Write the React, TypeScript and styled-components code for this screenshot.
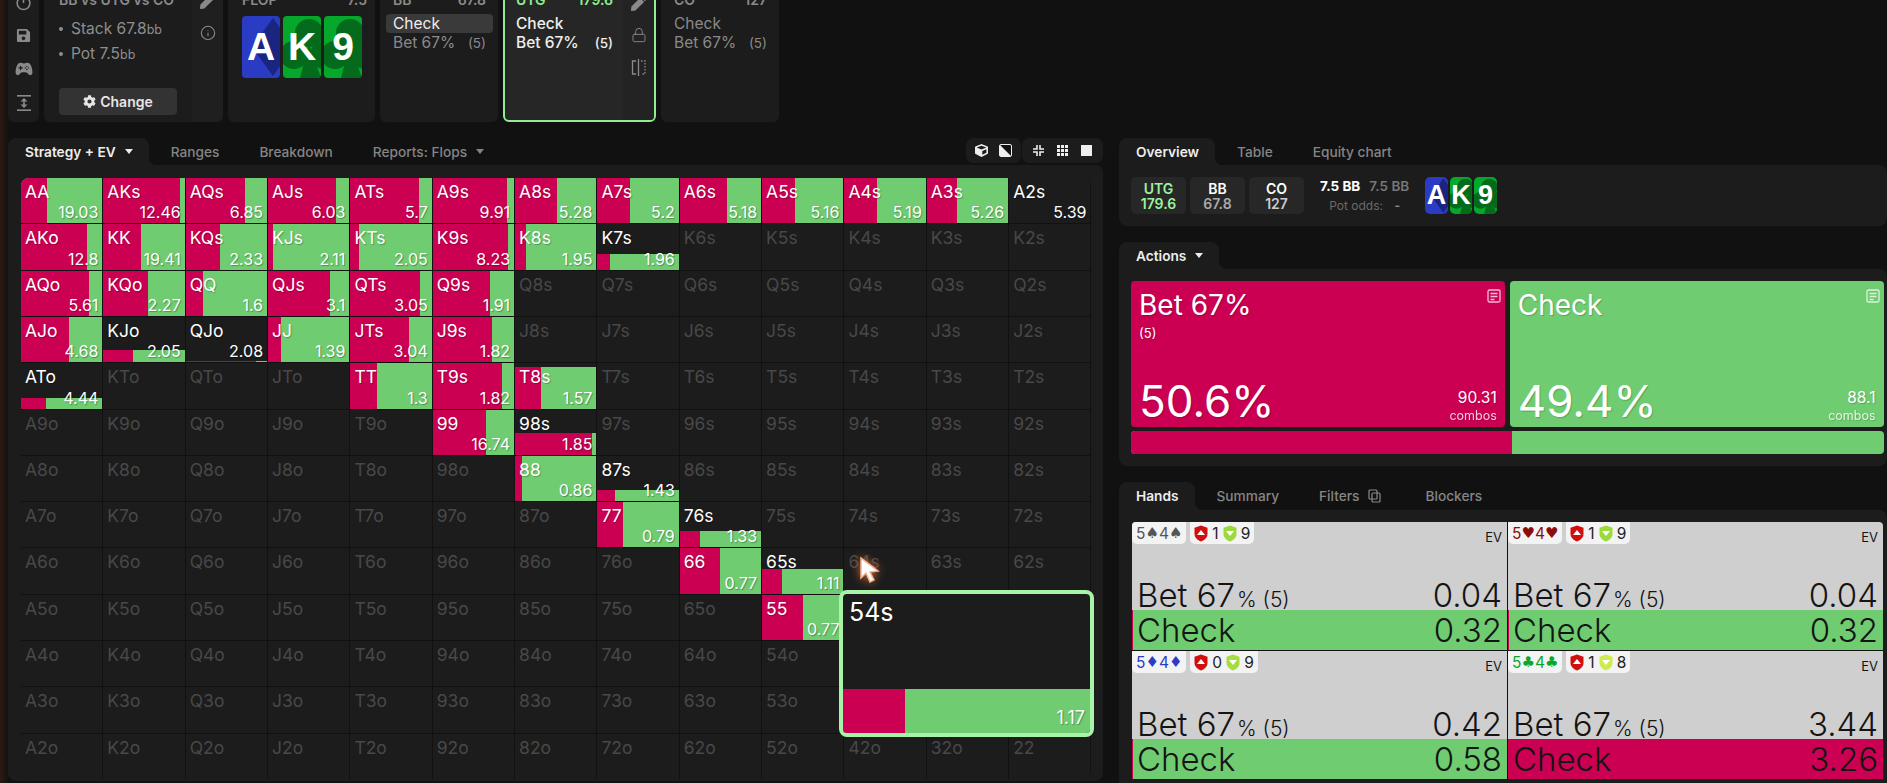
import { FC, ReactNode } from "react";
import styled, { createGlobalStyle } from "styled-components";
import { FaCog, FaCube, FaPen, FaSave } from "react-icons/fa";
import { IoGameController } from "react-icons/io5";
import { Info, Lock, Power } from "lucide-react";

const RED = "#cb0053";
const GREEN = "#6fcc70";
const PANEL = "#1c1c1c";
const ranks = "AKQJT98765432".split("");

// value, share of the first action, height of the bar
const cellData: Record<string, [number, number, number?]> = {
  AA: [19.03, 0.32],
  AKs: [12.46, 0.94],
  AQs: [6.85, 0.73],
  AJs: [6.03, 0.83],
  ATs: [5.7, 0.84],
  A9s: [9.91, 0.91],
  A8s: [5.28, 0.52],
  A7s: [5.2, 0.4],
  A6s: [5.18, 0.58],
  A5s: [5.16, 0.4],
  A4s: [5.19, 0.4],
  A3s: [5.26, 0.37],
  A2s: [5.39, 0.5, 0],
  AKo: [12.8, 0.81],
  KK: [19.41, 0.46],
  KQs: [2.33, 0.42],
  KJs: [2.11, 0.065],
  KTs: [2.05, 0.11],
  K9s: [8.23, 0.925],
  K8s: [1.95, 0.13],
  K7s: [1.96, 0.15, 0.35],
  AQo: [5.61, 0.83],
  KQo: [2.27, 0.55],
  QQ: [1.6, 0.21],
  QJs: [3.1, 0.765],
  QTs: [3.05, 0.85],
  Q9s: [1.91, 0.71],
  AJo: [4.68, 0.59],
  KJo: [2.05, 0.36, 0.26],
  QJo: [2.08, 0.87, 0.03],
  JJ: [1.39, 0.16],
  JTs: [3.04, 0.72],
  J9s: [1.82, 0.73],
  ATo: [4.44, 0.31, 0.24],
  TT: [1.3, 0.33],
  T9s: [1.82, 0.85],
  T8s: [1.57, 0.32, 0.92],
  "99": [16.74, 0.66],
  "98s": [1.85, 0.95, 0.48],
  "88": [0.86, 0.09],
  "87s": [1.43, 0.21, 0.24],
  "77": [0.79, 0.32],
  "76s": [1.33, 0.25, 0.37],
  "66": [0.77, 0.49],
  "65s": [1.11, 0.25, 0.55],
  "55": [0.77, 0.5],
};

const labelFor = (row: number, col: number) => {
  if (row === col) return ranks[row] + ranks[col];
  return row < col ? ranks[row] + ranks[col] + "s" : ranks[col] + ranks[row] + "o";
};

const labels = ranks.flatMap((_, row) => ranks.map((_, col) => labelFor(row, col)));

const hands = [
  { a: "5", b: "4", suit: "♠", color: "#555", low: 1, high: 9, shade: "#9bd93c", bet: "0.04", check: "0.32" },
  { a: "5", b: "4", suit: "♥", color: "#8c0b0b", low: 1, high: 9, shade: "#9bd93c", bet: "0.04", check: "0.32" },
  { a: "5", b: "4", suit: "♦", color: "#2a3cc8", low: 0, high: 9, shade: "#a6dc40", bet: "0.42", check: "0.58" },
  { a: "5", b: "4", suit: "♣", color: "#0aa82a", low: 1, high: 8, shade: "#cdea50", bet: "3.44", check: "3.26", worse: true },
];

const Suit: FC<{ kind: "diamond" | "club" }> = ({ kind }) =>
  kind === "diamond" ? (
    <SuitArt viewBox="0 0 38 62" preserveAspectRatio="none">
      <polygon points="31,2 52,31 31,60 10,31" fill="#19257f" />
    </SuitArt>
  ) : (
    <SuitArt viewBox="0 0 38 62" preserveAspectRatio="none">
      <g fill="#056b1c">
        <circle cx="26" cy="17" r="14" />
        <circle cx="11" cy="39" r="14" />
        <circle cx="41" cy="39" r="14" />
        <polygon points="26,28 38,62 17,62" />
      </g>
    </SuitArt>
  );

const Board: FC<{ small?: boolean }> = ({ small }) => (
  <BoardRow $small={small}>
    <BoardCard $small={small} $bg="#2a3cc4">
      <Suit kind="diamond" />
      <span>A</span>
    </BoardCard>
    <BoardCard $small={small} $bg="#05a82b">
      <Suit kind="club" />
      <span>K</span>
    </BoardCard>
    <BoardCard $small={small} $bg="#05a82b">
      <Suit kind="club" />
      <span>9</span>
    </BoardCard>
  </BoardRow>
);

const HeightIcon = () => (
  <svg width="14" height="16" viewBox="0 0 14 16" fill="#8a8a8a">
    <rect x="0" y="0" width="14" height="1.6" />
    <rect x="0" y="14.4" width="14" height="1.6" />
    <polygon points="7,3 10.5,6.5 3.5,6.5" />
    <polygon points="7,13 10.5,9.5 3.5,9.5" />
    <rect x="6.2" y="6" width="1.6" height="4" />
  </svg>
);

const SplitIcon = () => (
  <svg width="15" height="17" viewBox="0 0 15 17" fill="none" stroke="#8a8a8a" strokeWidth="1.3">
    <path d="M5 2H1.5v13H5" />
    <path d="M7.5 0v17" />
    <path d="M10 2h4v13h-4" strokeDasharray="1.5 1.5" />
  </svg>
);

const NotesIcon = () => (
  <svg width="14" height="14" viewBox="0 0 14 14" fill="none" stroke="currentColor" strokeWidth="1.3">
    <rect x="1" y="1" width="12" height="12" rx="1.5" />
    <path d="M3.5 4.5h7M3.5 7.5h7M3.5 10.5h4" />
  </svg>
);

const CopyIcon = () => (
  <CopyArt width="13" height="14" viewBox="0 0 13 14" fill="none" stroke="#8a8a8a" strokeWidth="1.2">
    <rect x="1" y="1" width="8" height="9" rx="1" />
    <rect x="4" y="4" width="8" height="9" rx="1" />
  </CopyArt>
);

const Shield: FC<{ color: string; up?: boolean }> = ({ color, up }) => (
  <svg width="14" height="17" viewBox="0 0 14 17">
    <path d="M7 .5l6.5 2.2v6.2c0 3.600-3 6-6.5 7.600C3.500 14.900 .5 12.500 .5 8.900V2.700z" fill={color} />
    <polygon points={up ? "7,5 11,10 3,10" : "3,6 11,6 7,11"} fill="#fff" />
  </svg>
);

const Caret = () => (
  <svg width="8" height="5" viewBox="0 0 8 5">
    <polygon points="0,0 8,0 4,5" fill="currentColor" />
  </svg>
);

const ActionCard: FC<{ name: string; size?: string; pct: string; combos: string; color: string }> = ({
  name,
  size,
  pct,
  combos,
  color,
}) => (
  <ActionBox $color={color}>
    <NotesCorner>
      <NotesIcon />
    </NotesCorner>
    <ActionName>{name}</ActionName>
    {size && <ActionSize>{size}</ActionSize>}
    <ActionBottom>
      <ActionPct>{pct}</ActionPct>
      <ActionCombos>
        <b>{combos}</b>
        <span>combos</span>
      </ActionCombos>
    </ActionBottom>
  </ActionBox>
);

const PlayerCard: FC<{
  seat: string;
  stack: string;
  width: number;
  active?: boolean;
  picked?: boolean;
  side?: ReactNode;
}> = ({ seat, stack, width, active, picked, side }) => (
  <SeatCard $active={active} $width={width}>
    <SeatBody $active={active}>
      <SeatHead $active={active}>
        <span>{seat}</span>
        <span>{stack}</span>
      </SeatHead>
      <SeatRow $active={active} $picked={picked}>
        <span>Check</span>
      </SeatRow>
      <SeatRow $active={active}>
        <span>Bet 67%</span>
        <SeatSize>(5)</SeatSize>
      </SeatRow>
    </SeatBody>
    {side}
  </SeatCard>
);

const App: FC = () => (
  <Page>
    <GlobalStyle />
    <TopBar>
      <SideRail>
        <Power size={17} strokeWidth={2.2} />
        <FaSave size={15} />
        <IoGameController size={18} />
        <HeightIcon />
      </SideRail>
      <GameCard>
        <GameBody>
          <CardTitle>BB vs UTG vs CO</CardTitle>
          <StackList>
            <li>
              Stack 67.8<small>bb</small>
            </li>
            <li>
              Pot 7.5<small>bb</small>
            </li>
          </StackList>
          <ChangeButton>
            <FaCog size={13} />
            Change
          </ChangeButton>
        </GameBody>
        <SideStrip>
          <FaPen size={16} />
          <Info size={16} strokeWidth={1.6} />
        </SideStrip>
      </GameCard>
      <FlopCard>
        <FlopHead>
          <span>FLOP</span>
          <span>7.5</span>
        </FlopHead>
        <Board />
      </FlopCard>
      <PlayerCard seat="BB" stack="67.8" width={118} picked />
      <PlayerCard
        seat="UTG"
        stack="179.6"
        width={153}
        active
        side={
          <SideStrip $tone="#232323">
            <FaPen size={16} />
            <Lock size={16} strokeWidth={1.4} />
            <SplitIcon />
          </SideStrip>
        }
      />
      <PlayerCard seat="CO" stack="127" width={118} />
    </TopBar>

    <Main>
      <LeftColumn>
        <TabBar>
          <Tab $active>
            Strategy + EV <Caret />
          </Tab>
          <Tab>Ranges</Tab>
          <Tab>Breakdown</Tab>
          <Tab>
            Reports: Flops <Caret />
          </Tab>
          <Toolbar>
            <ToolGroup>
              <FaCube size={13} />
              <svg width="13" height="13" viewBox="0 0 13 13">
                <rect x="0.5" y="0.5" width="12" height="12" rx="1.5" fill="#111" stroke="#eee" />
                <polygon points="1,1 12,12 1,12" fill="#eee" />
              </svg>
            </ToolGroup>
            <ToolGroup $wide>
              <svg width="11" height="11" viewBox="0 0 11 11" fill="none" stroke="#eee" strokeWidth="1.6">
                <path d="M4 0v4H0M7 0v4h4M4 11V7H0M7 11V7h4" />
              </svg>
              <svg width="11" height="11" viewBox="0 0 11 11" fill="#eee">
                {[0, 4, 8].flatMap((y) =>
                  [0, 4, 8].map((x) => <rect key={`${x}${y}`} x={x} y={y} width="3" height="3" />)
                )}
              </svg>
              <WhiteSquare />
            </ToolGroup>
          </Toolbar>
        </TabBar>
        <GridPanel>
          <GridWrap>
            <RangeGrid>
              {labels.map((label) => {
                const data = cellData[label];
                return (
                  <Cell key={label}>
                    {data && (
                      <CellBar style={{ height: `${(data[2] ?? 1) * 100}%` }}>
                        <CellRed style={{ width: `${data[1] * 100}%` }} />
                      </CellBar>
                    )}
                    <CellLabel $on={!!data}>{label}</CellLabel>
                    {data && <CellValue>{data[0]}</CellValue>}
                  </Cell>
                );
              })}
            </RangeGrid>
            <HoverCell>
              <HoverLabel>54s</HoverLabel>
              <HoverBar>
                <CellRed style={{ width: "25%" }} />
                <HoverValue>1.17</HoverValue>
              </HoverBar>
            </HoverCell>
          </GridWrap>
        </GridPanel>
      </LeftColumn>

      <RightColumn>
        <TabBar>
          <Tab $active>Overview</Tab>
          <Tab>Table</Tab>
          <Tab>Equity chart</Tab>
        </TabBar>
        <OverviewPanel>
          <Chip $color="#9df29d">
            UTG<span>179.6</span>
          </Chip>
          <Chip $color="#fff" $sub="#aaa">
            BB<span>67.8</span>
          </Chip>
          <Chip $color="#fff" $sub="#ccc">
            CO<span>127</span>
          </Chip>
          <PotBlock>
            <PotLine>
              <b>7.5 BB</b>
              <i>7.5 BB</i>
            </PotLine>
            <PotOdds>
              Pot odds: <b>-</b>
            </PotOdds>
          </PotBlock>
          <Board small />
        </OverviewPanel>

        <TabBar $gapTop>
          <Tab $active>
            Actions <Caret />
          </Tab>
        </TabBar>
        <ActionsPanel>
          <ActionCards>
            <ActionCard name="Bet 67%" size="(5)" pct="50.6%" combos="90.31" color={RED} />
            <ActionCard name="Check" pct="49.4%" combos="88.1" color={GREEN} />
          </ActionCards>
          <SplitBar>
            <CellRed style={{ width: "50.6%" }} />
          </SplitBar>
        </ActionsPanel>

        <TabBar $gapTop $tall>
          <Tab $active>Hands</Tab>
          <Tab>Summary</Tab>
          <Tab>
            Filters <CopyIcon />
          </Tab>
          <Tab>Blockers</Tab>
        </TabBar>
        <HandsPanel>
          <HandsGrid>
            {hands.map((hand) => (
              <HandCell key={hand.suit}>
                <HandTop>
                  <HandChips>
                    <HandChip $color={hand.color} $gap={0}>
                      {hand.a}
                      <SuitGlyph>{hand.suit}</SuitGlyph>
                      {hand.b}
                      <SuitGlyph>{hand.suit}</SuitGlyph>
                    </HandChip>
                    <HandChip $color="#222" $gap={4}>
                      <Shield color="#d00f0f" up />
                      {hand.low}
                      <Shield color={hand.shade} />
                      {hand.high}
                    </HandChip>
                  </HandChips>
                  <EvTag>EV</EvTag>
                </HandTop>
                <BetRow>
                  <span>
                    Bet 67<small>% (5)</small>
                  </span>
                  <span>{hand.bet}</span>
                </BetRow>
                <CheckRow $worse={hand.worse}>
                  <span>Check</span>
                  <span>{hand.check}</span>
                </CheckRow>
              </HandCell>
            ))}
          </HandsGrid>
        </HandsPanel>
      </RightColumn>
    </Main>

    <CursorMark width="22" height="28" viewBox="0 0 22 28">
      <path d="M2 2l0 20 5-5 4 9 4-2-4-8 8-1z" fill="#fff" stroke="#f6b48c" strokeWidth="1.5" />
    </CursorMark>
  </Page>
);

export default App;

const GlobalStyle = createGlobalStyle`
  html, body {
    margin: 0;
    padding: 0;
    background: linear-gradient(90deg, #2c1a14 0, #16110f 8px, #111 9px);
  }
  * {
    box-sizing: border-box;
  }
`;

const Page = styled.div`
  position: relative;
  width: 1887px;
  height: 783px;
  overflow: hidden;
  font-family: Inter, "Liberation Sans", sans-serif;
  color: #fff;
`;

const TopBar = styled.div`
  display: flex;
  gap: 5px;
  height: 138px;
  margin-top: -16px;
  padding-left: 8px;
`;

const SideRail = styled.div`
  width: 31px;
  background: ${PANEL};
  border-radius: 6px;
  color: #8a8a8a;
  display: flex;
  flex-direction: column;
  align-items: center;
  gap: 17px;
  padding-top: 10px;
`;

const GameCard = styled.div`
  width: 179px;
  display: flex;
  background: ${PANEL};
  border-radius: 6px;
  overflow: hidden;
`;

const GameBody = styled.div`
  flex: 1;
  display: flex;
  flex-direction: column;
  padding: 8px 15px 7px;
`;

const CardTitle = styled.div`
  font-size: 14px;
  line-height: 16px;
  font-weight: 600;
  color: #8a8a8a;
  white-space: nowrap;
`;

const StackList = styled.ul`
  margin: 9px 0 0;
  padding: 0;
  list-style: none;
  color: #8e8e8e;
  font-size: 15.5px;
  line-height: 24px;
  li {
    position: relative;
    padding-left: 12px;
  }
  li::before {
    content: "";
    position: absolute;
    left: 0;
    top: 10px;
    width: 4px;
    height: 4px;
    border-radius: 50%;
    background: #8e8e8e;
  }
  small {
    font-size: 12.5px;
  }
`;

const ChangeButton = styled.button`
  margin-top: auto;
  height: 27px;
  width: 118px;
  border: none;
  border-radius: 4px;
  background: #333;
  color: #e6e6e6;
  font: 600 14px Inter, "Liberation Sans", sans-serif;
  display: flex;
  align-items: center;
  justify-content: center;
  gap: 4px;
`;

const SideStrip = styled.div<{ $tone?: string }>`
  width: 31px;
  background: ${(props) => props.$tone ?? "#1f1f1f"};
  color: #8a8a8a;
  display: flex;
  flex-direction: column;
  align-items: center;
  gap: 16px;
  padding-top: 9px;
`;

const FlopCard = styled.div`
  width: 147px;
  background: ${PANEL};
  border-radius: 6px;
  padding: 8px 8px 0 14px;
`;

const FlopHead = styled(CardTitle)`
  display: flex;
  justify-content: space-between;
  margin-bottom: 8px;
`;

const BoardRow = styled.div<{ $small?: boolean }>`
  display: flex;
  gap: ${(props) => (props.$small ? 2 : 3)}px;
`;

const BoardCard = styled.div<{ $small?: boolean; $bg: string }>`
  position: relative;
  overflow: hidden;
  width: ${(props) => (props.$small ? 22.5 : 38)}px;
  height: ${(props) => (props.$small ? 37 : 62)}px;
  border-radius: ${(props) => (props.$small ? 5 : 4)}px;
  background: ${(props) => props.$bg};
  display: flex;
  align-items: center;
  justify-content: center;
  font-family: "Liberation Sans", Arial, sans-serif;
  font-weight: 700;
  font-size: ${(props) => (props.$small ? 27 : 39)}px;
  span {
    position: relative;
  }
`;

const SuitArt = styled.svg`
  position: absolute;
  inset: 0;
  width: 100%;
  height: 100%;
`;

const CopyArt = styled.svg`
  margin-right: 4px;
`;

const SeatCard = styled.div<{ $active?: boolean; $width: number }>`
  display: flex;
  width: ${(props) => props.$width}px;
  background: ${(props) => (props.$active ? "#262626" : PANEL)};
  border: ${(props) => (props.$active ? "2px solid #90ee90" : "none")};
  border-radius: 6px;
  overflow: hidden;
`;

const SeatBody = styled.div<{ $active?: boolean }>`
  flex: 1;
  padding: ${(props) => (props.$active ? "6px 10px 0 11px" : "8px 12px 0 13px")};
`;

const SeatHead = styled(CardTitle)<{ $active?: boolean }>`
  display: flex;
  justify-content: space-between;
  margin-bottom: 6px;
  color: ${(props) => (props.$active ? "#90ee90" : "#8a8a8a")};
`;

const SeatRow = styled.div<{ $active?: boolean; $picked?: boolean }>`
  display: flex;
  justify-content: space-between;
  align-items: center;
  height: 19px;
  margin: 0 -7px;
  padding: 0 7px;
  font-size: 15.5px;
  white-space: nowrap;
  border-radius: 4px;
  font-weight: ${(props) => (props.$active ? 500 : 400)};
  color: ${(props) => (props.$active || props.$picked ? "#eee" : "#8a8a8a")};
  background: ${(props) => (props.$picked ? "#3a3a3a" : "transparent")};
`;

const SeatSize = styled.span`
  font-size: 13.5px;
`;

const Main = styled.div`
  display: grid;
  grid-template-columns: 1095px 768px;
  column-gap: 16px;
  padding: 16px 0 0 8px;
`;

const LeftColumn = styled.div`
  display: flex;
  flex-direction: column;
`;

const RightColumn = styled.div`
  display: flex;
  flex-direction: column;
`;

const TabBar = styled.div<{ $gapTop?: boolean; $tall?: boolean }>`
  display: flex;
  align-items: stretch;
  height: ${(props) => (props.$tall ? 28 : 27)}px;
  margin-top: ${(props) => (props.$gapTop ? 16 : 0)}px;
`;

const Tab = styled.div<{ $active?: boolean }>`
  position: relative;
  display: flex;
  align-items: center;
  gap: 9px;
  padding: 0 ${(props) => (props.$active ? "16px 0 17px" : "20px")};
  margin-right: ${(props) => (props.$active ? 2 : 0)}px;
  font-size: 13.7px;
  font-weight: ${(props) => (props.$active ? 600 : 500)};
  color: ${(props) => (props.$active ? "#eee" : "#858585")};
  background: ${(props) => (props.$active ? PANEL : "transparent")};
  border-radius: 8px 8px 0 0;
  white-space: nowrap;
  ${(props) =>
    props.$active &&
    `&::after {
      content: "";
      position: absolute;
      right: -8px;
      bottom: 0;
      width: 8px;
      height: 8px;
      background: radial-gradient(circle at 100% 0, #111 8px, ${PANEL} 8.5px);
    }`}
`;

const Toolbar = styled.div`
  margin-left: auto;
  display: flex;
  gap: 1px;
  height: 25px;
`;

const ToolGroup = styled.div<{ $wide?: boolean }>`
  width: ${(props) => (props.$wide ? 81 : 55)}px;
  display: flex;
  align-items: center;
  justify-content: space-around;
  padding: 0 4px;
  background: ${PANEL};
  border-radius: 7px;
  color: #eee;
`;

const WhiteSquare = styled.div`
  width: 11px;
  height: 11px;
  background: #eee;
`;

const GridPanel = styled.div`
  background: ${PANEL};
  border-radius: 0 8px 8px 8px;
  padding: 13px 12.5px 0 13px;
  height: 616px;
`;

const GridWrap = styled.div`
  position: relative;
`;

const RangeGrid = styled.div`
  display: grid;
  grid-template-columns: repeat(13, 1fr);
  grid-template-rows: repeat(13, 1fr);
  gap: 1px;
  height: 601px;
  background: #111;
  border-radius: 8px;
  overflow: hidden;
`;

const Cell = styled.div`
  position: relative;
  background: ${PANEL};
  overflow: hidden;
`;

const CellBar = styled.div`
  position: absolute;
  left: 0;
  right: 0;
  bottom: 0;
  display: flex;
  background: ${GREEN};
`;

const CellRed = styled.div`
  background: ${RED};
  height: 100%;
`;

const CellLabel = styled.div<{ $on: boolean }>`
  position: relative;
  padding: 4px 0 0 4px;
  font-size: 17.5px;
  line-height: 20px;
  color: ${(props) => (props.$on ? "#fff" : "#484848")};
  text-shadow: ${(props) => (props.$on ? "1px 1px 1px rgba(0,0,0,.25)" : "none")};
`;

const CellValue = styled.div`
  position: absolute;
  right: 4px;
  bottom: 1px;
  font-size: 16px;
  line-height: 20px;
  color: #fff;
  text-shadow: 1px 1px 1px rgba(0, 0, 0, 0.3);
`;

const HoverCell = styled.div`
  position: absolute;
  left: 818px;
  top: 412px;
  width: 255px;
  height: 147px;
  display: flex;
  flex-direction: column;
  justify-content: space-between;
  background: ${PANEL};
  border: 4px solid #a7f3a7;
  border-radius: 8px;
  overflow: hidden;
`;

const HoverLabel = styled.div`
  padding: 4px 0 0 6px;
  font-size: 25px;
  line-height: 28px;
`;

const HoverBar = styled.div`
  position: relative;
  height: 44px;
  display: flex;
  background: ${GREEN};
`;

const HoverValue = styled.span`
  position: absolute;
  right: 5px;
  bottom: 5px;
  font-size: 18px;
  text-shadow: 1px 1px 1px rgba(0, 0, 0, 0.3);
`;

const OverviewPanel = styled.div`
  display: flex;
  align-items: center;
  gap: 4px;
  height: 61px;
  padding-left: 12px;
  background: ${PANEL};
  border-radius: 0 8px 8px 8px;
`;

const Chip = styled.div<{ $color: string; $sub?: string }>`
  width: 55px;
  height: 37px;
  border-radius: 5px;
  background: #272727;
  display: flex;
  flex-direction: column;
  align-items: center;
  justify-content: center;
  font-size: 14px;
  line-height: 15px;
  font-weight: 600;
  color: ${(props) => props.$color};
  span {
    color: ${(props) => props.$sub ?? props.$color};
  }
`;

const PotBlock = styled.div`
  margin: 0 12px 0 12px;
  display: flex;
  flex-direction: column;
  align-items: center;
  gap: 4px;
`;

const PotLine = styled.div`
  display: flex;
  gap: 9px;
  font-size: 13.5px;
  line-height: 16px;
  b {
    font-weight: 700;
  }
  i {
    font-style: normal;
    font-weight: 600;
    color: #777;
  }
`;

const PotOdds = styled.div`
  font-size: 12px;
  line-height: 15px;
  color: #6a6a6a;
  b {
    margin-left: 8px;
    color: #888;
  }
`;

const ActionsPanel = styled.div`
  height: 197px;
  padding: 12px 3.5px 12px 12px;
  background: ${PANEL};
  border-radius: 0 8px 8px 8px;
`;

const ActionCards = styled.div`
  display: grid;
  grid-template-columns: 1fr 1fr;
  gap: 5px;
`;

const ActionBox = styled.div<{ $color: string }>`
  position: relative;
  height: 146px;
  padding: 8px 8px 2px;
  border-radius: 4px;
  background: ${(props) => props.$color};
  display: flex;
  flex-direction: column;
  text-shadow: 1px 1px 1px rgba(0, 0, 0, 0.2);
`;

const NotesCorner = styled.div`
  position: absolute;
  top: 8px;
  right: 4px;
  color: rgba(255, 255, 255, 0.75);
  line-height: 0;
`;

const ActionName = styled.div`
  font-size: 28px;
  line-height: 32px;
`;

const ActionSize = styled.div`
  margin-top: 4px;
  font-size: 13px;
  line-height: 16px;
`;

const ActionBottom = styled.div`
  margin-top: auto;
  display: flex;
  justify-content: space-between;
  align-items: flex-end;
`;

const ActionPct = styled.div`
  font-size: 44px;
  line-height: 48px;
`;

const ActionCombos = styled.div`
  display: flex;
  flex-direction: column;
  align-items: flex-end;
  font-size: 12.5px;
  line-height: 16px;
  padding-bottom: 1px;
  b {
    font-size: 15.5px;
    line-height: 20px;
    font-weight: 400;
  }
  span {
    opacity: 0.8;
  }
`;

const SplitBar = styled.div`
  margin-top: 4px;
  height: 23px;
  display: flex;
  background: ${GREEN};
  border-radius: 4px;
  overflow: hidden;
`;

const HandsPanel = styled.div`
  height: 273px;
  padding: 12px 4px 0 13px;
  background: ${PANEL};
  border-radius: 0 8px 0 0;
`;

const HandsGrid = styled.div`
  display: grid;
  grid-template-columns: 1fr 1fr;
  grid-auto-rows: 128px;
  gap: 1px;
  background: #111;
  border-radius: 4px 4px 0 0;
  overflow: hidden;
`;

const HandCell = styled.div`
  display: flex;
  flex-direction: column;
  background: #cfcfcf;
  color: #141414;
  font-weight: 300;
`;

const HandTop = styled.div`
  flex: 1;
  display: flex;
  justify-content: space-between;
  padding-right: 5px;
`;

const HandChips = styled.div`
  display: flex;
  gap: 4px;
  align-items: flex-start;
`;

const HandChip = styled.div<{ $color: string; $gap: number }>`
  height: 22px;
  padding: 0 4px;
  display: flex;
  align-items: center;
  gap: ${(props) => props.$gap}px;
  font-size: 15.5px;
  font-weight: 400;
  color: ${(props) => props.$color};
  background: #f3f3f3;
  border-radius: 0 0 5px 5px;
`;

const SuitGlyph = styled.span`
  font-family: "DejaVu Sans", sans-serif;
  font-size: 15px;
  line-height: 20px;
`;

const EvTag = styled.span`
  margin-top: 7px;
  font-size: 13px;
  font-weight: 400;
  line-height: 16px;
`;

const BetRow = styled.div`
  display: flex;
  justify-content: space-between;
  height: 30px;
  padding: 0 5px;
  font-size: 33px;
  line-height: 30px;
  small {
    margin-left: 2px;
    font-size: 21px;
  }
`;

const CheckRow = styled.div<{ $worse?: boolean }>`
  display: flex;
  justify-content: space-between;
  height: 40px;
  padding: 0 5px 0 4px;
  font-size: 33px;
  line-height: 40px;
  background: ${(props) => (props.$worse ? RED : GREEN)};
  border-left: 1px solid ${RED};
`;

const CursorMark = styled.svg`
  position: absolute;
  left: 859px;
  top: 556px;
  filter: drop-shadow(0 0 5px rgba(240, 120, 60, 0.9));
`;
